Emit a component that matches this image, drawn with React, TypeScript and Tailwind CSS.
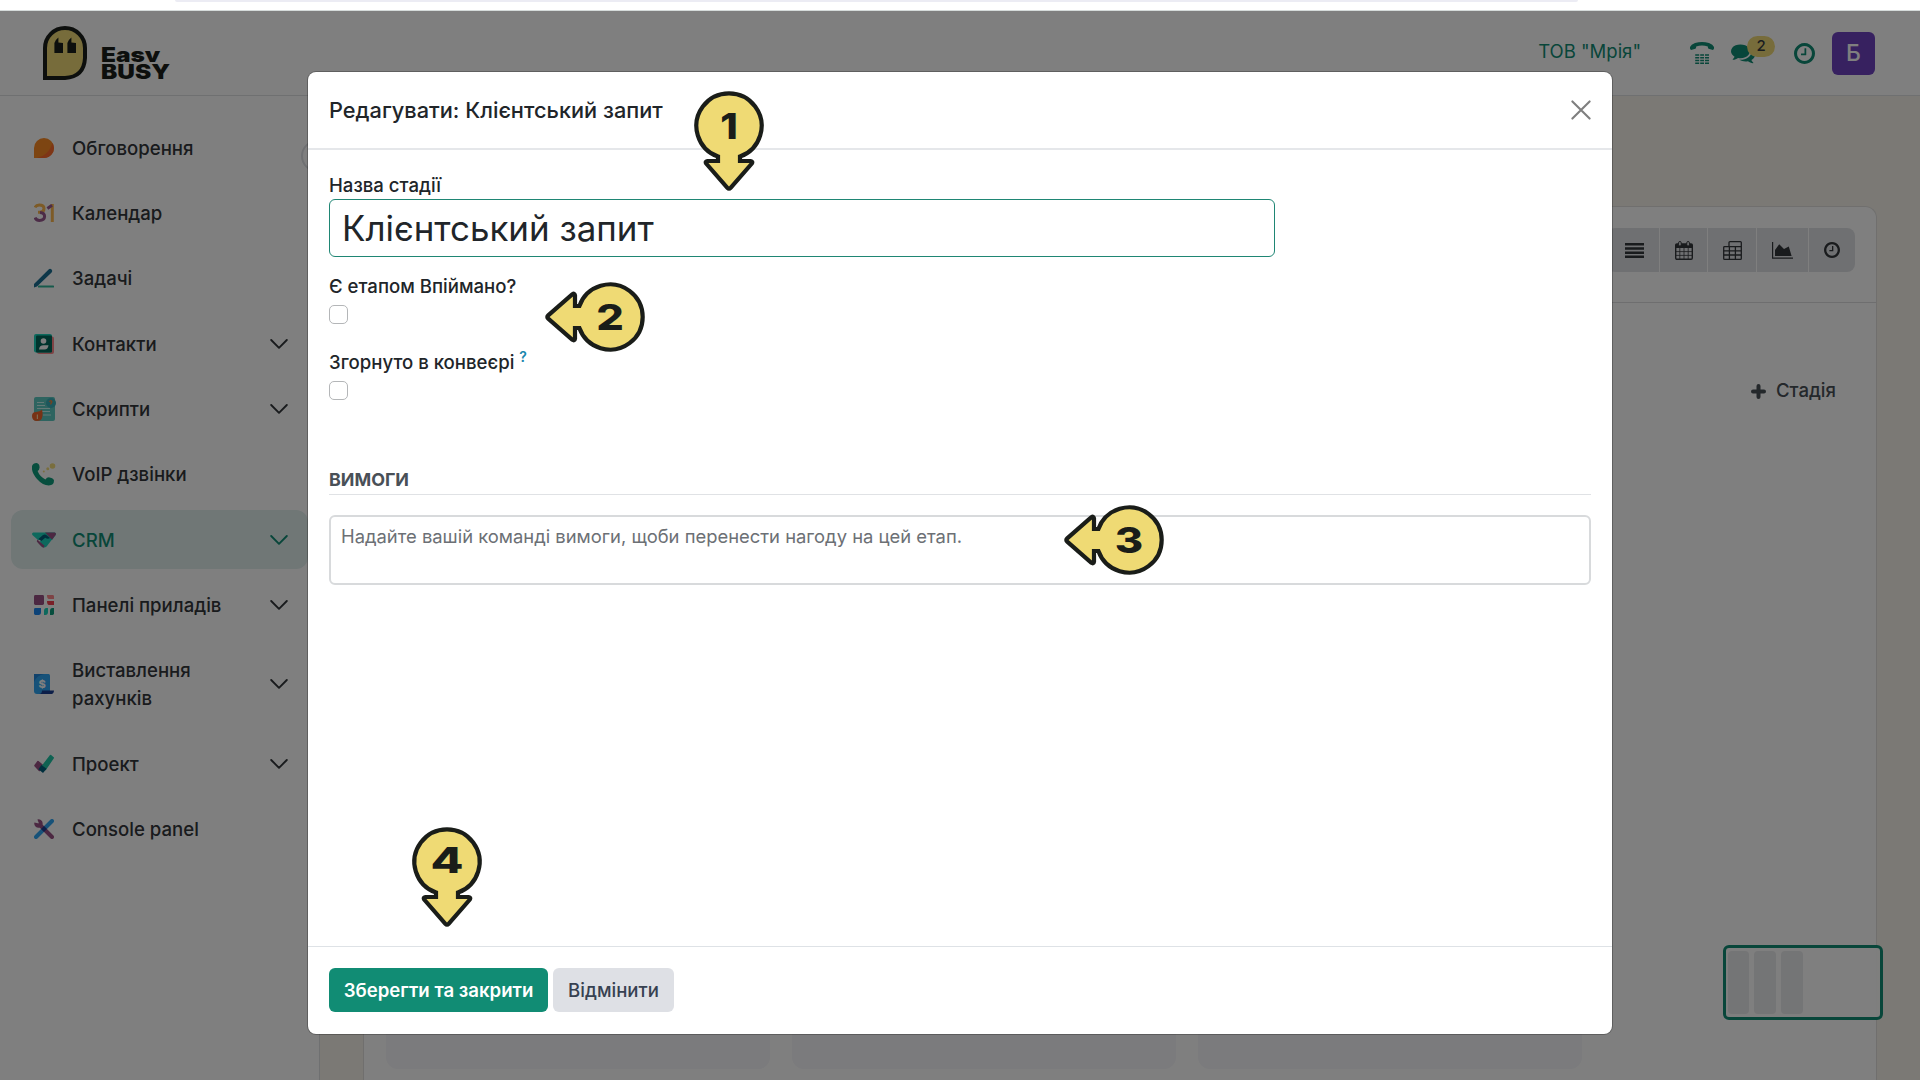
import React, { useState } from 'react';

interface MenuItem {
  label: string;
  icon: React.ReactNode;
  expandable?: boolean;
  active?: boolean;
  tall?: boolean;
}

const DiscussIcon = () => (
  <svg className="h-5 w-5" viewBox="0 0 20 20">
    <path d="M0 20V10A10 10 0 1 1 10 20Z" fill="#fb8a24" />
    <path d="M18.6 5A10 10 0 0 1 10 20H3C11 18 16 13 18.6 5Z" fill="#fc6a2c" />
  </svg>
);

const CalendarIcon = () => (
  <svg className="h-5 w-5" viewBox="0 0 20 20" fill="none" strokeWidth="3">
    <path d="M1 4.5Q2 2 5.2 2Q10 2 10 5.6Q10 9 6 9.2H4" stroke="#fbb64f" />
    <path d="M6 9.4Q10.6 9.6 10.6 13.4Q10.4 17.4 5.4 17.4Q2 17.4 1 14.6" stroke="#98588f" />
    <path d="M18.3 1V19" stroke="#fbb64f" />
    <path d="M18 2.2L13.4 5.4" stroke="#98588f" />
  </svg>
);

const TodoIcon = () => (
  <svg className="h-5 w-5" viewBox="0 0 20 20">
    <rect x="4" y="17.6" width="16" height="2" rx="0.6" fill="#2fb598" />
    <path d="M0 16L14.6 1.4Q16 0 17.6 1.4Q19 3 17.6 4.4L3 18.6L0 19.6Z" fill="#1a6f93" />
  </svg>
);

const ContactsIcon = () => (
  <svg className="h-5 w-5" viewBox="0 0 20 20">
    <rect x="3" y="2.5" width="17" height="17.5" rx="2" fill="#fc868b" />
    <rect x="0" y="0" width="18" height="18.5" rx="2" fill="#1ad3bb" />
    <rect x="2" y="1.5" width="16" height="17" rx="1" fill="#00685b" />
    <circle cx="9.5" cy="7" r="2.8" fill="#fff" />
    <path d="M5 15.5Q5.5 11 10 11.3L14.5 11.3Q14 15.5 10.5 15.5Z" fill="#fff" />
  </svg>
);

const ScriptsIcon = () => (
  <svg className="h-6 w-6" viewBox="0 0 24 24">
    <rect x="2" y="0" width="21" height="24" rx="2" fill="#5cc9c0" />
    <circle cx="19" cy="6" r="5" fill="#3aaeb8" />
    <path d="M5 5.5H12M5 8.5H13M5 11.5H18M10 14.5H18M11 18H19" stroke="#c9f2ee" strokeWidth="1.2" />
    <path d="M17.6 5Q18 3.4 19.2 3.8Q20.6 4.6 18.8 6.4V7.4" stroke="#f0843c" strokeWidth="1.3" fill="none" />
    <path d="M0 19Q0 15 4 15Q8 14.6 10 12.4Q11 16 10.4 19.4Q9.6 24 5 24Q0 24 0 19Z" fill="#f0652a" />
    <path d="M5.4 17.6V22" stroke="#ffd7a0" strokeWidth="1.2" />
  </svg>
);

const VoipIcon = () => (
  <svg className="h-6 w-6" viewBox="0 0 24 24">
    <path d="M0 4Q1 1 4.6 1Q7.4 1.4 7.6 5.4Q7.4 8 5.6 9Q7.6 14.4 13.4 17.4Q15 15 17.6 15.4Q22 16.4 22 18.6Q22 23.4 16.8 23.6Q10.6 23.4 5 17Q-1 10 0 4Z" fill="#0f9d7c" />
    <circle cx="20.5" cy="4" r="2.8" fill="#f3dc7c" />
    <circle cx="15.8" cy="6.8" r="1.5" fill="#f3dc7c" />
    <circle cx="11.8" cy="9.4" r="1" fill="#f3dc7c" />
  </svg>
);

const CrmIcon = () => (
  <svg className="h-6 w-6" viewBox="0 0 24 24">
    <path d="M1.4 4.5H22.6Q24.6 5 23.6 7L20 12H6L0.4 7Q-0.6 5 1.4 4.5Z" fill="#1ad3bb" />
    <path d="M13 4.5H22.6Q24.6 5 23.6 7L20 11.8Z" fill="#985184" />
    <path d="M8 13L13 8.4L20 11.6L14.6 18.6Q12 20.6 9.6 18.4Z" fill="#1ad3bb" />
    <path d="M6.4 11L11 7Q13 5.8 14.6 7.2L18 10Q16 11.4 13.2 9.8L9.4 13Z" fill="#005e7a" />
    <path d="M5.2 11.4L12.6 17.8L11.6 19.8Q9.6 19.4 4.8 13.6Z" fill="#985184" />
  </svg>
);

const DashboardsIcon = () => (
  <svg className="h-5 w-5" viewBox="0 0 20 20">
    <rect width="10" height="10" rx="1.4" fill="#985184" />
    <path d="M13 0H18.6Q20 0 20 1.4V4H15Q13 4 13 0Z" fill="#fc868b" />
    <path d="M13 6H20V10H15Q13 10 13 6Z" fill="#f43f4e" />
    <path d="M1.4 13H7V17Q7 20 4.6 20H1.4Q0 20 0 18.6V14.4Q0 13 1.4 13Z" fill="#1a86f0" />
    <path d="M14 13V17Q14 20 11.4 20H10V16Q10 13 12.4 13Z" fill="#1ad3bb" />
    <path d="M20 13V18.6Q20 20 18.6 20H16V16Q16 13 18.4 13Z" fill="#0f9d7c" />
  </svg>
);

const InvoicingIcon = () => (
  <svg className="h-5 w-5" viewBox="0 0 20 20">
    <path d="M0 0H14.6Q16 0 16 1.6V20H3Q0 20 0 17Z" fill="#2ea5f2" />
    <path d="M0 8Q3 1 10 0H0Z" fill="#2184d8" />
    <path d="M8 16.4H20Q20 20 16.4 20H5Q8 19.6 8 16.4Z" fill="#1b3f93" />
    <text x="4.6" y="14" fontSize="11" fontWeight="800" fill="#fff">$</text>
  </svg>
);

const ProjectIcon = () => (
  <svg className="h-5 w-5" viewBox="0 0 20 20" strokeLinejoin="round">
    <path d="M4 7.6L9.4 12L5.4 16.4L1 11.6Z" fill="#985184" stroke="#985184" strokeWidth="1.6" />
    <path d="M16.6 1.6L19.2 3.8L11.4 15.4L8.4 12.2Z" fill="#1fc4a5" stroke="#1fc4a5" strokeWidth="1.6" />
    <path d="M7.4 11L12.6 14.8L9 19L4.4 15.2Z" fill="#005e7a" />
  </svg>
);

const ConsoleIcon = () => (
  <svg className="h-5 w-5" viewBox="0 0 20 20">
    <path d="M2 18L18 2" stroke="#2ea5f2" strokeWidth="4" strokeLinecap="round" />
    <path d="M6 6L18 18" stroke="#985184" strokeWidth="4" strokeLinecap="round" />
    <path d="M3.4 0.4L5 4.4L0.4 3.4A4.2 4.2 0 1 0 3.4 0.4Z" fill="#985184" />
    <path d="M10 7L13 10L10 13L7 10Z" fill="#1b3f93" />
  </svg>
);

const ChevronIcon = () => (
  <svg className="ml-auto h-3 w-[18px]" viewBox="0 0 18 12" fill="none" stroke="currentColor" strokeWidth="1.9" strokeLinecap="round" strokeLinejoin="round">
    <path d="M1.2 2L9 9.8L16.8 2" />
  </svg>
);

const CloseIcon = () => (
  <svg className="h-5 w-5" viewBox="0 0 20 20" stroke="#7f7f7f" strokeWidth="2.1" strokeLinecap="round">
    <path d="M1.4 1.4L18.6 18.6M18.6 1.4L1.4 18.6" />
  </svg>
);

const ClockIcon = ({ className }: { className: string }) => (
  <svg className={className} viewBox="0 128 1536 1536" fill="currentColor">
    <path d="M896 544v448q0 14-9 23t-23 9h-320q-14 0-23-9t-9-23v-64q0-14 9-23t23-9h224v-352q0-14 9-23t23-9h64q14 0 23 9t9 23zm416 352q0-148-73-273t-198-198-273-73-273 73-198 198-73 273 73 273 198 198 273 73 273-73 198-198 73-273zm224 0q0 209-103 385.5t-279.5 279.5-385.5 103-385.5-103-279.5-279.5-103-385.5 103-385.5 279.5-279.5 385.5-103 385.5 103 279.5 279.5 103 385.5z" />
  </svg>
);

const PhoneIcon = () => (
  <svg className="h-[22px] w-[24px]" viewBox="0 0 24 22" fill="currentColor">
    <path d="M0 5Q1 2.6 5 1Q8.6 0 12 0Q15.4 0 19 1Q23 2.6 24 5Q24.4 7 23 8L18.6 6.8Q17.8 6.4 17.8 4.4Q15 3.6 12 3.6Q9 3.6 6.2 4.4Q6.2 6.4 5.4 6.8L1 8Q-.4 7 0 5Z" />
    <path d="M5.2 12.2h4v1.6h-4zM10.2 12.2h3.8v1.6h-3.8zM15 12.2h4v1.6h-4zM5.2 15h4v1.6h-4zM10.2 15h3.8v1.6h-3.8zM15 15h4v1.6h-4zM5.2 17.8h4v1.4h-4zM10.2 17.8h3.8v1.4h-3.8zM15 17.8h4v1.4h-4zM5.2 20.4h4V22h-4zM10.2 20.4h3.8V22h-3.8zM15 20.4h4V22h-4z" />
  </svg>
);

const ChatIcon = () => (
  <svg className="h-6 w-6" viewBox="0 0 1792 1792" fill="currentColor">
    <path d="M1408 768q0 139-94 257t-256.5 186.5-353.5 68.5q-86 0-176-16-124 88-278 128-36 9-86 16h-3q-11 0-20.5-8t-11.5-21q-1-3-1-6.5t.5-6.5 2-6l2.5-5 3.5-5.5 4-5 4.5-5 4-4.5q5-6 23-25t26-29.5 22.5-29 25-38.5 20.5-44q-124-72-195-177t-71-224q0-139 94-257t256.5-186.5 353.5-68.5 353.5 68.5 256.5 186.5 94 257zm384 256q0 120-71 224.5t-195 176.5q10 24 20.5 44t25 38.5 22.5 29 26 29.5 23 25q1 1 4 4.5t4.5 5 4 5 3.5 5.5l2.5 5 2 6 .5 6.5-1 6.5q-3 14-13 22t-22 7q-50-7-86-16-154-40-278-128-90 16-176 16-271 0-472-132 58 4 88 4 161 0 309-45t264-129q125-92 192-212t67-254q0-77-23-152 129 71 204 178t75 230z" />
  </svg>
);

const ListViewIcon = () => (
  <svg className="ml-0.5 h-[15px] w-[19px]" viewBox="0 0 19 15" fill="currentColor">
    <path d="M0 0h19v2.6H0zM0 4.2h19v2.6H0zM0 8.4h19V11H0zM0 12.4h19V15H0z" />
  </svg>
);

const CalendarViewIcon = () => (
  <svg className="h-[19px] w-[18px]" viewBox="0 0 18 19">
    <rect x="0.7" y="3" width="16.6" height="15.3" rx="1.2" fill="none" stroke="currentColor" strokeWidth="1.4" />
    <path d="M0.7 3H17.3V7H0.7Z" fill="currentColor" />
    <path d="M4.8 7V18M9 7V18M13.2 7V18M1 10.6H17M1 14.4H17" stroke="currentColor" strokeWidth="0.8" />
    <rect x="3.6" y="0.5" width="2.6" height="4.6" rx="1.3" fill="#e0e2e6" stroke="currentColor" />
    <rect x="11.8" y="0.5" width="2.6" height="4.6" rx="1.3" fill="#e0e2e6" stroke="currentColor" />
  </svg>
);

const PivotViewIcon = () => (
  <svg className="h-[19px] w-[19px]" viewBox="0 0 19 19" fill="none" stroke="currentColor" strokeWidth="1.3">
    <path d="M6 5.6V1.6Q6 .7 7 .7H17.4Q18.3 .7 18.3 1.6V17.4Q18.3 18.3 17.4 18.3H1.6Q.7 18.3 .7 17.4V6.4Q.7 5.6 1.6 5.6H18.3M.7 9.8H18.3M.7 14H18.3M6.4 5.6V18.3M12.4 5.6V18.3" />
  </svg>
);

const GraphViewIcon = () => (
  <svg className="h-[17px] w-[21px]" viewBox="0 0 21 17">
    <path d="M.6 0V16.2H21" fill="none" stroke="currentColor" strokeWidth="1.2" />
    <path d="M3 14V8L7.2 2.2L12 7L16.8 4.4L19.6 14Z" fill="currentColor" />
  </svg>
);

const menu: MenuItem[] = [
  { label: 'Обговорення', icon: <DiscussIcon /> },
  { label: 'Календар', icon: <CalendarIcon /> },
  { label: 'Задачі', icon: <TodoIcon /> },
  { label: 'Контакти', icon: <ContactsIcon />, expandable: true },
  { label: 'Скрипти', icon: <ScriptsIcon />, expandable: true },
  { label: 'VoIP дзвінки', icon: <VoipIcon /> },
  { label: 'CRM', icon: <CrmIcon />, expandable: true, active: true },
  { label: 'Панелі приладів', icon: <DashboardsIcon />, expandable: true },
  { label: 'Виставлення рахунків', icon: <InvoicingIcon />, expandable: true, tall: true },
  { label: 'Проект', icon: <ProjectIcon />, expandable: true },
  { label: 'Console panel', icon: <ConsoleIcon /> },
];

const views = [
  { id: 'list', icon: <ListViewIcon />, width: 'w-[52px]' },
  { id: 'calendar', icon: <CalendarViewIcon />, width: 'w-[47px]' },
  { id: 'pivot', icon: <PivotViewIcon />, width: 'w-12' },
  { id: 'graph', icon: <GraphViewIcon />, width: 'w-[51px]' },
  { id: 'activity', icon: <ClockIcon className="h-4 w-4" />, width: 'w-[46px]' },
];

const Logo = () => (
  <div className="flex items-end">
    <svg className="h-[54px] w-[44px]" viewBox="0 0 44 54">
      <path d="M2 52V22A20 20 0 0 1 42 22V32Q41 51 22 52Z" fill="#efd976" stroke="#1b1f1b" strokeWidth="4" />
      <path d="M11.4 27V17Q12 14 15.4 11.4V16.4L20 17V27ZM24.4 27V17Q25 14 28.4 11.4V16.4L33 17V27Z" fill="#1b1f1b" />
    </svg>
    <div className="-mb-0.5 ml-3.5 flex origin-left scale-x-[1.22] flex-col text-[20px] leading-5 font-black text-[#1b1f1b]">
      <span className="h-[17px] overflow-hidden">Easy</span>
      <span>BUSY</span>
    </div>
  </div>
);

const Header = () => (
  <header className="flex h-[85px] shrink-0 justify-between border-b border-[#dee0e2] bg-white pl-[43px]">
    <div className="pt-[15px]">
      <Logo />
    </div>
    <div className="flex h-[84px] items-center pr-[45px] text-[#118c74]">
      <span className="mr-[49px] pb-0.5 text-[18.5px]">ТОВ "Мрія"</span>
      <PhoneIcon />
      <div className="relative ml-[17px]">
        <ChatIcon />
        <span className="absolute -top-[5px] left-4 flex h-[21px] w-7 items-center justify-center rounded-full bg-[#efd976] text-[15px] font-medium text-[#343a40]">2</span>
      </div>
      <ClockIcon className="ml-[39px] h-[21px] w-[21px]" />
      <span className="ml-[17px] flex h-[43px] w-[43px] items-center justify-center rounded-md bg-[#6f42c1] text-[23px] font-medium text-white">Б</span>
    </div>
  </header>
);

const Sidebar = () => (
  <aside className="relative flex w-80 shrink-0 flex-col gap-[5.95px] border-r border-[#dee0e2] bg-white pt-[22px] pr-[11px] pl-[11px]">
    {menu.map((item) => (
      <div
        key={item.label}
        className={`flex items-center rounded-xl pr-5 pl-[21px] ${item.tall ? 'h-[87.4px]' : 'h-[59.4px]'} ${
          item.active ? 'bg-[#e0eeed] text-[#118c74]' : 'text-[#33363a]'
        }`}
      >
        <span className="flex w-6 justify-center">{item.icon}</span>
        <span className="ml-4 w-[170px] text-[18.6px] leading-7 font-medium">{item.label}</span>
        {item.expandable && <ChevronIcon />}
      </div>
    ))}
    <span className="absolute top-[44px] -right-3.5 h-8 w-8 rounded-full border-2 border-[#dee0e5] bg-white" />
  </aside>
);

const Pipeline = () => (
  <main className="flex flex-1 flex-col bg-[#f6f2ea] pt-[110px] pr-[43px] pl-[43px]">
    <div className="flex flex-1 flex-col rounded-t-xl border border-b-0 border-[#e0dfdd] bg-white">
      <div className="flex h-24 items-start justify-end border-b border-[#dddddf] pt-[21px] pr-[21px]">
        <div className="flex gap-px overflow-hidden rounded-lg text-[#33363a]">
          {views.map((view) => (
            <span key={view.id} className={`flex h-11 items-center justify-center bg-[#dfe1e5] ${view.width}`}>
              {view.icon}
            </span>
          ))}
        </div>
      </div>
      <div className="flex flex-1 gap-[22px] pt-[21px] pr-[21px] pb-[11px] pl-[22px]">
        <div className="w-96 rounded-xl bg-[#f6f6fa]" />
        <div className="w-96 rounded-xl bg-[#f6f6fa]" />
        <div className="w-96 rounded-xl bg-[#f6f6fa]" />
        <div className="mt-[53px] ml-auto flex h-7 items-center pr-[19px] text-[18.6px] font-medium text-[#495057]">
          <svg className="mr-2.5 h-[15px] w-[15px]" viewBox="0 0 15 15">
            <path d="M7.5 2V13M2 7.5H13" stroke="currentColor" strokeWidth="4" strokeLinecap="round" />
          </svg>
          Стадія
        </div>
      </div>
    </div>
  </main>
);

const ScrollPreview = () => (
  <div className="absolute right-[37px] bottom-[60px] flex h-[75px] w-40 gap-[5px] rounded-md border-[3px] border-[#118c74] bg-white/90 px-0.5 py-[3px]">
    <div className="w-[21px] rounded-sm bg-[#e9eaec]" />
    <div className="w-[22px] rounded-sm bg-[#e9eaec]" />
    <div className="w-[22px] rounded-sm bg-[#e9eaec]" />
  </div>
);

interface MarkerProps {
  value: string;
  place: string;
  left?: boolean;
  stretch: number;
}

// Numbered pointer: a disc with an arrow head hanging below it, or turned to the left
const Marker = ({ value, place, left, stretch }: MarkerProps) => (
  <svg className={`absolute h-[140px] w-[140px] ${place}`} viewBox="-70 -70 140 140">
    <path
      transform={left ? 'rotate(90)' : undefined}
      d="M-11 30.6A32.6 32.6 0 1 1 11 30.6V35H21.6Q24.2 35.4 22.8 37.6L1.6 61.8Q0 63.6 -1.6 61.8L-22.8 37.6Q-24.2 35.4 -21.6 35H-11Z"
      fill="#efda74"
      stroke="#1a1d19"
      strokeWidth="4.2"
    />
    <text
      transform={`translate(0 ${value === '4' ? 10.5 : 13}) scale(${stretch} 1)`}
      textAnchor="middle"
      fontSize="35.5"
      fontWeight="800"
      fill="#1a1d19"
    >
      {value}
    </text>
  </svg>
);

const labelClass = 'flex h-7 items-center text-[18.6px] font-medium text-[#212529]';
const checkboxClass = 'mt-1 block h-[19px] w-[19px] appearance-none rounded-[5px] border-[1.5px] border-[#b4b6b8] bg-white';

const EditStageDialog = () => {
  const [name, setName] = useState('Клієнтський запит');
  const [won, setWon] = useState(false);
  const [folded, setFolded] = useState(false);

  return (
    <div className="relative flex h-[962px] w-[1304px] flex-col rounded-lg bg-white ring-1 ring-black/25">
      <div className="flex h-[78px] items-center justify-between border-b-2 border-[#e5e7ea] pr-[21px] pl-[21px]">
        <h4 className="text-[21.75px] font-medium text-[#212529]">Редагувати: Клієнтський запит</h4>
        <CloseIcon />
      </div>
      <div className="flex flex-1 flex-col px-[21px] pt-[22px]">
        <label className={labelClass}>Назва стадії</label>
        <input
          value={name}
          onChange={(e) => setName(e.target.value)}
          className="-mt-px h-[58px] w-[946px] rounded-md border border-[#1f8674] px-3 text-[34.9px] text-[#212529] outline-none"
        />
        <label className={`${labelClass} mt-4`}>Є етапом Впіймано?</label>
        <input type="checkbox" checked={won} onChange={() => setWon(!won)} className={checkboxClass} />
        <label className={`${labelClass} mt-[25px]`}>
          Згорнуто в конвеєрі
          <sup className="top-[-6px] ml-[5px] text-[14px] font-semibold text-[#1a87ad]">?</sup>
        </label>
        <input type="checkbox" checked={folded} onChange={() => setFolded(!folded)} className={checkboxClass} />
        <div className="mt-[67px] flex h-7 items-center border-b border-[#e0e2e5] text-[17.9px] font-bold text-[#495057]">ВИМОГИ</div>
        <textarea
          placeholder="Надайте вашій команді вимоги, щоби перенести нагоду на цей етап."
          className="mt-5 h-[70px] resize-none rounded-md border-2 border-[#d8dadc] px-2.5 pt-[5px] text-[18.4px] leading-7 text-[#212529] outline-none placeholder:text-[#6c7075]"
        />
      </div>
      <div className="flex h-[88px] items-start gap-[5px] border-t border-[#dee2e6] px-[21px] pt-[21px] text-[18.6px]">
        <button className="h-11 w-[219px] rounded-md bg-[#118c74] pt-px font-semibold text-white">Зберегти та закрити</button>
        <button className="h-11 w-[121px] rounded-md bg-[#dee0e5] pt-px font-medium text-[#374151]">Відмінити</button>
      </div>
      <Marker value="1" place="left-[351px] top-[-16px]" stretch={1.12} />
      <Marker value="2" place="left-[232px] top-[174.5px]" left stretch={1.22} />
      <Marker value="3" place="left-[751px] top-[397.5px]" left stretch={1.22} />
      <Marker value="4" place="left-[69px] top-[720px]" stretch={1.35} />
    </div>
  );
};

export default function App() {
  return (
    <div className="flex h-[1080px] w-[1920px] flex-col overflow-hidden bg-white font-['Inter',sans-serif]">
      <div className="h-[11px] shrink-0 border-b border-[#d5dbda] bg-white">
        <div className="ml-[175px] h-[2px] w-[1403px] rounded-b-full bg-[#ececf4]" />
      </div>
      <div className="relative flex flex-1 flex-col">
        <Header />
        <div className="flex flex-1">
          <Sidebar />
          <Pipeline />
        </div>
        <ScrollPreview />
        <div className="absolute inset-0 flex items-start justify-center bg-black/50 pt-[61px]">
          <EditStageDialog />
        </div>
      </div>
    </div>
  );
}
